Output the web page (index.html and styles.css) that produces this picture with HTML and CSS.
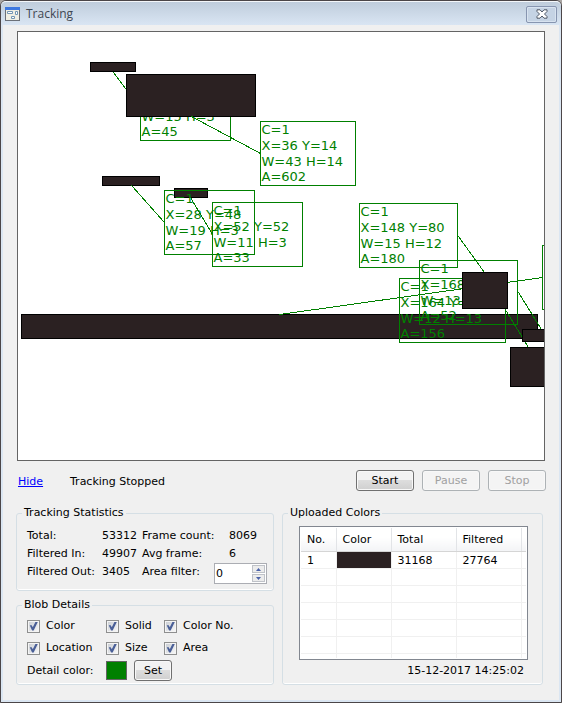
FILE: index.html
```html
<!DOCTYPE html>
<html lang="en">
<head>
<meta charset="utf-8">
<title>Tracking</title>
<link rel="stylesheet" href="styles.css">
</head>
<body>
<div class="window">
  <header class="titlebar">
    <svg class="app-icon" width="15" height="14" viewBox="0 0 15 14" aria-hidden="true">
      <rect x="0" y="0" width="15" height="14" fill="#6b7078"/>
      <rect x="0" y="0" width="15" height="3" fill="#3d78e0"/>
      <rect x="1" y="3" width="13" height="10" fill="#f0efe4"/>
      <path d="M2.5 4.500h5v2h-5zM10.500 4.500h2v3h-2zM6.500 9.500h3v2h-3z" fill="#fff" stroke="#7396b4"/>
    </svg>
    <h1 class="title">Tracking</h1>
    <button class="close" type="button" aria-label="Close">
      <svg width="12" height="10" viewBox="0 0 12 10" aria-hidden="true">
        <path d="M1 .8h3L6 3l2-2.200h3v1.700L8.500 5 11 7.500v1.700H8L6 7 4 9.200H1V7.500L3.500 5 1 2.500z" fill="#fff" stroke="#4f5766"/>
      </svg>
    </button>
  </header>

  <main class="content">
    <svg class="view" role="img" aria-label="Tracked blobs">
      <g transform="translate(-17.5 -31.5)">
        <g class="lines">
          <path d="M113 72L140 108"/>
        </g>
        <g class="label">
          <rect x="140" y="76" width="90" height="64"/>
          <text x="141" y="120">W=15 H=3</text>
          <text x="141" y="135">A=45</text>
        </g>
        <g class="blobs">
          <rect x="90" y="62" width="45" height="9"/>
          <rect x="126" y="74" width="129" height="42"/>
          <rect x="102" y="176" width="57" height="9"/>
          <rect x="174" y="188" width="33" height="9"/>
          <rect x="21" y="314" width="516" height="24"/>
        </g>
        <g class="lines">
          <path d="M191 116L260 153M131 185L164 222M190 197L212 234M279 314L542 277M458 236L484 272M518 292L541 329M506 311L528 347"/>
        </g>
        <g class="label">
          <rect x="260" y="121" width="95" height="64"/>
          <text x="261" y="133">C=1</text>
          <text x="261" y="149">X=36 Y=14</text>
          <text x="261" y="165">W=43 H=14</text>
          <text x="261" y="180">A=602</text>
        </g>
        <g class="label">
          <rect x="164" y="190" width="90" height="64"/>
          <text x="165" y="202">C=1</text>
          <text x="165" y="218">X=28 Y=48</text>
          <text x="165" y="234">W=19 H=3</text>
          <text x="165" y="249">A=57</text>
        </g>
        <g class="label">
          <rect x="212" y="202" width="90" height="64"/>
          <text x="213" y="214">C=1</text>
          <text x="213" y="230">X=52 Y=52</text>
          <text x="213" y="246">W=11 H=3</text>
          <text x="213" y="261">A=33</text>
        </g>
        <g class="label">
          <rect x="359" y="203" width="98" height="64"/>
          <text x="360" y="215">C=1</text>
          <text x="360" y="231">X=148 Y=80</text>
          <text x="360" y="247">W=15 H=12</text>
          <text x="360" y="262">A=180</text>
        </g>
        <g class="label">
          <rect x="419" y="260" width="98" height="64"/>
          <text x="420" y="272">C=1</text>
          <text x="420" y="288">X=168</text>
          <text x="420" y="304">W=13</text>
          <text x="420" y="319">A=52</text>
        </g>
        <g class="label">
          <rect x="399" y="278" width="106" height="64"/>
          <text x="400" y="290">C=1</text>
          <text x="400" y="306">X=164 Y=</text>
          <text x="400" y="322">W=12 H=13</text>
          <text x="400" y="337">A=156</text>
        </g>
        <g class="label">
          <rect x="542" y="245" width="98" height="64"/>
        </g>
        <g class="blobs">
          <rect x="462" y="272" width="45" height="36"/>
          <rect x="522" y="329" width="45" height="12"/>
          <rect x="510" y="347" width="57" height="39"/>
        </g>
      </g>
    </svg>

    <div class="toolbar">
      <a class="hide" href="#">Hide</a>
      <span class="status">Tracking Stopped</span>
      <button class="btn" type="button">Start</button>
      <button class="btn" type="button" disabled>Pause</button>
      <button class="btn" type="button" disabled>Stop</button>
    </div>

    <div class="panels">
      <div class="left">
        <fieldset class="group statistics">
          <legend>Tracking Statistics</legend>
          <div class="stats">
            <span>Total:</span><span>53312</span><span>Frame count:</span><span class="num">8069</span>
            <span>Filtered In:</span><span>49907</span><span>Avg frame:</span><span class="num">6</span>
            <span>Filtered Out:</span><span>3405</span><label for="area-filter">Area filter:</label>
            <span class="spinner">
              <input id="area-filter" type="text" inputmode="numeric" value="0">
              <span class="steps">
                <button type="button" aria-label="Increase"><svg width="5" height="3" viewBox="0 0 5 3"><path d="M0 3L2.500 0 5 3z"/></svg></button>
                <button type="button" aria-label="Decrease"><svg width="5" height="3" viewBox="0 0 5 3"><path d="M0 0L2.500 3 5 0z"/></svg></button>
              </span>
            </span>
          </div>
        </fieldset>

        <fieldset class="group blob">
          <legend>Blob Details</legend>
          <div class="checks">
            <label><input type="checkbox" checked>Color</label>
            <label><input type="checkbox" checked>Solid</label>
            <label><input type="checkbox" checked>Color No.</label>
            <label><input type="checkbox" checked>Location</label>
            <label><input type="checkbox" checked>Size</label>
            <label><input type="checkbox" checked>Area</label>
          </div>
          <div class="detail">
            <span>Detail color:</span>
            <span class="swatch"></span>
            <button class="btn set" type="button">Set</button>
          </div>
        </fieldset>
      </div>

      <fieldset class="group uploaded">
        <legend>Uploaded Colors</legend>
        <div class="list">
          <table>
            <colgroup><col class="c-no"><col class="c-color"><col class="c-num"><col class="c-num"><col></colgroup>
            <thead><tr><th>No.</th><th>Color</th><th>Total</th><th>Filtered</th><th></th></tr></thead>
            <tbody>
              <tr><td>1</td><td class="dark"></td><td>31168</td><td>27764</td><td></td></tr>
              <tr><td></td><td></td><td></td><td></td><td></td></tr>
              <tr><td></td><td></td><td></td><td></td><td></td></tr>
              <tr><td></td><td></td><td></td><td></td><td></td></tr>
              <tr><td></td><td></td><td></td><td></td><td></td></tr>
              <tr><td></td><td></td><td></td><td></td><td></td></tr>
              <tr class="last"><td></td><td></td><td></td><td></td><td></td></tr>
            </tbody>
          </table>
        </div>
        <time class="stamp">15-12-2017 14:25:02</time>
      </fieldset>
    </div>
  </main>
</div>
</body>
</html>
```
FILE: styles.css
```css
* { box-sizing: border-box; }

body {
  margin: 0;
  background: #a9a5a2;
  color: #000;
  font: 11px/18px Verdana, "DejaVu Sans", sans-serif;
}

button, input { font: inherit; color: inherit; margin: 0; }

.window {
  display: flex;
  flex-direction: column;
  min-height: 100vh;
  padding: 0 2px 2px;
  border: 1px solid #4b4648;
  border-radius: 6px 6px 0 0;
  background: #dbe6f2;
}

.titlebar {
  display: flex;
  align-items: center;
  gap: 6px;
  height: 24px;
  margin: 0 -2px;
  padding: 1px 4px 0;
  border-top: 1px solid #f4f7fa;
  border-radius: 5px 5px 0 0;
  background: linear-gradient(#bfcddc, #d9e5f3);
}

.title {
  flex: 1;
  margin: 0;
  font: 12px/18px "Segoe UI", "Open Sans", "Noto Sans", sans-serif;
  color: #3f4753;
}

.close {
  display: flex;
  align-items: center;
  justify-content: center;
  width: 31px;
  height: 17px;
  padding: 0;
  border: 1px solid #8795b0;
  border-radius: 2px;
  background: #c5d3e4;
  box-shadow: inset 0 0 0 1px #d8e3f0;
}

.content {
  flex: 1;
  padding: 6px 13px 0;
  background: #f0f0f0;
}

.view {
  display: block;
  width: calc(100% - 2px);
  height: 430px;
  margin: 0 1px;
  border: 1px solid #646464;
  background: #fff;
  shape-rendering: crispEdges;
}

.lines path, .label rect { fill: none; stroke: #008000; }
.label text { fill: #008000; font-size: 13px; }
.blobs rect { fill: #2b2122; stroke: #000; }

.toolbar {
  display: flex;
  align-items: center;
  gap: 8px;
  margin-top: 9px;
  padding-left: 2px;
}

.hide, .status { padding-top: 2px; }
.hide { width: 44px; color: #00f; }
.status { flex: 1; }

.btn {
  width: 58px;
  height: 21px;
  padding: 1px 0 0;
  border: 1px solid #707070;
  border-radius: 3px;
  background: linear-gradient(#f2f2f2 0 45%, #dddddd 50%, #cfcfcf);
  box-shadow: inset 0 0 0 1px #f8f8f8;
  line-height: 18px;
}

.btn:disabled {
  border-color: #adb2b5;
  background: #f4f4f4;
  color: #a0a0a0;
}

.btn.set { width: 38px; }

.panels {
  display: grid;
  grid-template-columns: 258px 1fr;
  gap: 8px;
  margin: 13px 3px 0 0;
}

.left { display: flex; flex-direction: column; gap: 5px; }

.group {
  min-width: 0;
  margin: 0;
  padding: 4px 6px 6px 10px;
  border: 1px solid #d5dfe5;
  border-radius: 3px;
  box-shadow: inset 0 -1px #fff;
}

.group legend { margin-left: -5px; padding: 0 2px; line-height: 18px; }

.stats {
  display: grid;
  grid-template-columns: 75px 40px 72px 1fr;
  grid-auto-rows: 18px;
  white-space: nowrap;
}

.num { padding-left: 15px; }

.spinner {
  display: flex;
  min-width: 0;
  height: 21px;
  border: 1px solid #abadb3;
  background: #fff;
}

.spinner input {
  flex: 1;
  width: 0;
  min-width: 0;
  padding: 0 1px;
  border: 0;
  background: none;
}

.steps {
  display: flex;
  flex-direction: column;
  gap: 1px;
  width: 15px;
  padding: 1px;
}

.steps button {
  flex: 1;
  display: flex;
  align-items: center;
  justify-content: center;
  padding: 0;
  border: 1px solid #bfc2c8;
  background: #ececec;
}

.steps path { fill: #4a62a8; }

.statistics { padding-top: 5px; padding-bottom: 9px; }
.blob { padding-top: 1px; padding-bottom: 2px; }

.checks {
  display: grid;
  grid-template-columns: 79px 58px 1fr;
  grid-auto-rows: 22px;
}

.checks label { display: flex; align-items: center; gap: 6px; white-space: nowrap; }

.checks input {
  appearance: none;
  width: 13px;
  height: 13px;
  border: 1px solid #8e8f8f;
  background:
    linear-gradient(135deg, #cbcfd5, #f6f6f6) center / 9px 9px no-repeat,
    #f4f4f4;
  display: grid;
  place-items: center;
}

.checks input:checked::before {
  content: "";
  width: 9px;
  height: 9px;
  background: #4a5f97;
  clip-path: polygon(8% 42%, 30% 42%, 42% 65%, 74% 0, 100% 0, 52% 100%, 34% 100%);
}

.detail { display: flex; align-items: center; height: 23px; }
.detail span:first-child { width: 79px; }

.swatch {
  width: 21px;
  height: 19px;
  margin-right: 7px;
  border: 1px solid #646464;
  background: #008000;
}

.uploaded { padding: 4px 14px 0 16px; }
.uploaded legend { margin-left: -11px; }

.list {
  padding: 1px;
  border: 1px solid #828790;
  background: #fff;
}

table { width: 100%; table-layout: fixed; border-collapse: collapse; }
.c-no { width: 35px; }
.c-color { width: 55px; }
.c-num { width: 65px; }

th, td {
  height: 17px;
  padding: 2px 0 0 6px;
  border: solid #f0f0f0;
  border-width: 0 1px 1px 0;
  line-height: 14px;
  text-align: left;
  font-weight: normal;
  white-space: nowrap;
}

th {
  height: 23px;
  border-color: #e2e4e7 #e2e4e7 #d5d5d5;
  background: linear-gradient(#fff 40%, #f3f4f6);
}

th:last-child, td:last-child { border-right: 0; }
.last td { height: 5px; padding: 0; line-height: 4px; border-bottom: 0; }
.dark { background: #2b2122; }

.stamp { display: block; padding: 2px 4px 0 0; text-align: right; }
```
